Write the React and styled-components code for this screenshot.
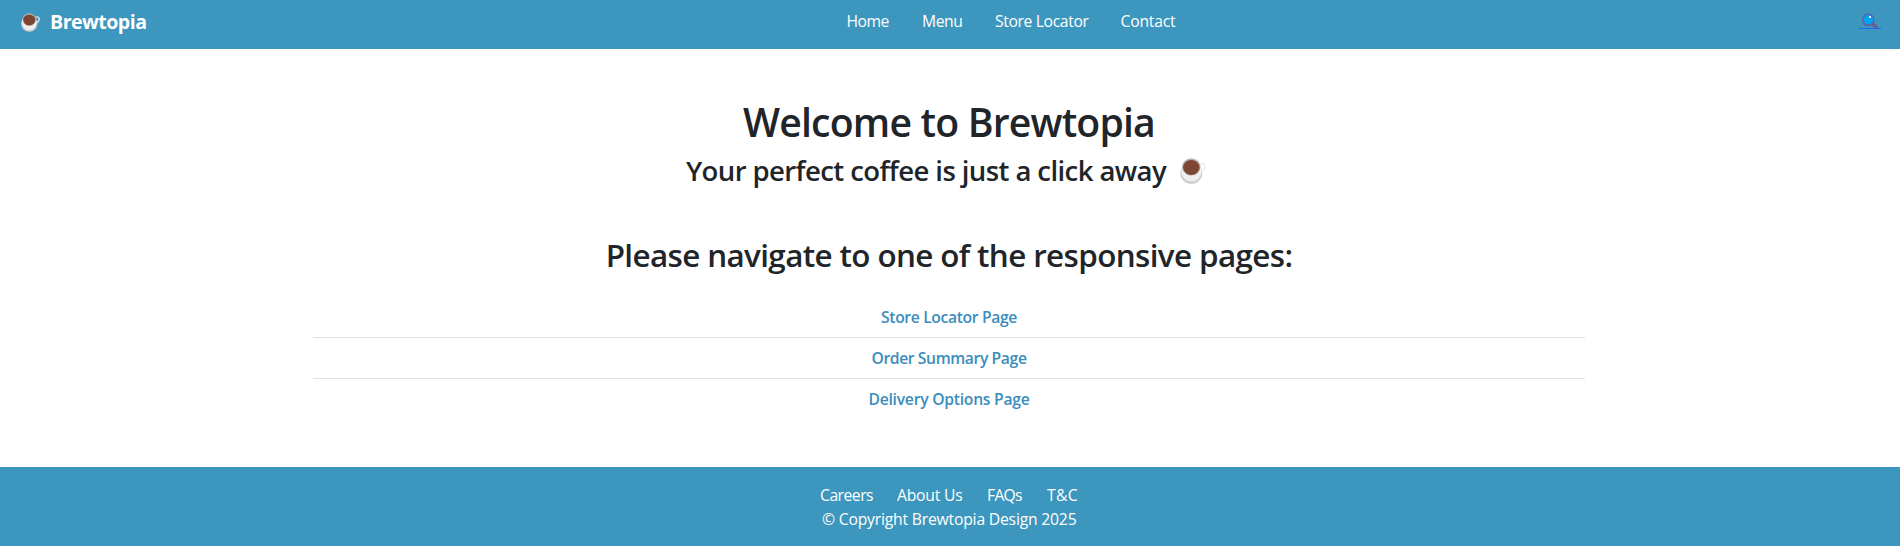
import React from "react";
import styled, { createGlobalStyle } from "styled-components";

const GlobalStyle = createGlobalStyle`
  *, *::before, *::after { box-sizing: border-box; }
  body {
    margin: 0;
    background: #fff;
    color: #212529;
    font: 400 15.7px/24px "Segoe UI", "Open Sans", "Noto Sans", sans-serif;
  }
  h1, h2, h3, ul, p { margin: 0; padding: 0; }
`;

const Page = styled.div`
  display: flex;
  flex-direction: column;
  height: 546px;
`;

const Header = styled.header`
  display: flex;
  justify-content: space-between;
  align-items: flex-start;
  height: 49px;
  padding: 6px 19px 0 21px;
  background: #3d96bd;
`;

const Brand = styled.a`
  display: flex;
  align-items: center;
  gap: 10px;
  width: 143px;
  height: 32px;
  color: #fff;
  font-size: 19.6px;
  font-weight: 700;
  line-height: 32px;
  letter-spacing: ${(p) => p.$spacing || 0}px;
`;

const Nav = styled.nav`
  display: flex;
  gap: 32px;
  padding-top: 3px;
`;

const Label = styled.a`
  width: ${(p) => p.$width}px;
  color: #fff;
  white-space: nowrap;
  letter-spacing: ${(p) => p.$spacing || 0}px;
`;

const SearchLink = styled.a`
  width: 22px;
  height: 23px;
  padding: 7px 0 0 2px;
  border-bottom: 1px solid #0d6efd;
  line-height: 0;
`;

const Main = styled.main`
  display: flex;
  flex: 1;
  flex-direction: column;
  align-items: center;
  padding: 49px 2px 0 0;
`;

const Title = styled.h1`
  font-size: 39.2px;
  font-weight: 600;
  line-height: 48px;
  white-space: nowrap;
  letter-spacing: ${(p) => p.$spacing || 0}px;
`;

const Subtitle = styled.h3`
  display: flex;
  align-items: center;
  gap: 14px;
  margin-top: 8px;
  padding-right: 6px;
  font-size: 27.5px;
  font-weight: 600;
  line-height: 34px;
  white-space: nowrap;
  letter-spacing: ${(p) => p.$spacing || 0}px;
`;

const Prompt = styled.h2`
  margin-top: 48px;
  font-size: 31.4px;
  font-weight: 600;
  line-height: 38px;
  white-space: nowrap;
  letter-spacing: ${(p) => p.$spacing || 0}px;
`;

const PageList = styled.ul`
  width: 1272px;
  margin-top: 23px;
  list-style: none;
`;

const PageItem = styled.li`
  height: 41px;
  padding: 8px 0;
  border-bottom: 1px solid #dee2e6;
  color: #3b8dbd;
  font-weight: 600;
  text-align: center;
  letter-spacing: ${(p) => p.$spacing || 0}px;
  &:last-child { border-bottom: 0; }
`;

const Footer = styled.footer`
  display: flex;
  flex-direction: column;
  align-items: center;
  height: 79px;
  padding: 16px 2px 0 0;
  background: #3d96bd;
`;

const FooterLinks = styled.div`
  display: flex;
  gap: 24px;
`;

const Cup = ({ size, handle }) => (
  <svg width={size} height={size} viewBox="0 0 26 26" aria-hidden="true">
    <ellipse cx="11.3" cy="15" rx="11" ry="10.8" fill="#cdcdcd" />
    <path d="M20 6c3-1.600 5.300 0 4.800 3.200-.5 3-2.600 4.600-5.300 4.600" fill="none" stroke={handle} strokeWidth="1.800" />
    <ellipse cx="11.3" cy="13" rx="10.2" ry="10.6" fill="#efefef" />
    <ellipse cx="11.3" cy="8.900" rx="9.200" ry="8.700" fill="#b4b4b4" />
    <ellipse cx="11.3" cy="9.500" rx="8.200" ry="7.500" fill="#7d4533" />
  </svg>
);

const Magnifier = () => (
  <svg width="18" height="16" viewBox="0 0 18 16" aria-hidden="true">
    <path d="M12.300 11.300l3 3" stroke="#6b5a96" strokeWidth="3.400" strokeLinecap="round" />
    <circle cx="7.300" cy="6.700" r="5.600" fill="#00a1f1" stroke="#6b5a9c" strokeWidth="1.400" />
    <rect x="8" y="3" width="2" height="2" fill="#e3f5ff" />
  </svg>
);

const navLinks = [
  ["Home", 43.5, -0.5],
  ["Menu", 41, -0.45],
  ["Store Locator", 93.5, -0.36],
  ["Contact", 56, -0.22],
];

const footerLinks = [
  ["Careers", 53, -0.5],
  ["About Us", 66, -0.2],
  ["FAQs", 36, -0.7],
  ["T&C", 31, 0.4],
];

const pages = [
  ["Store Locator Page", -0.36],
  ["Order Summary Page", -0.39],
  ["Delivery Options Page", -0.25],
];

export default function App() {
  return (
    <>
      <GlobalStyle />
      <Page>
        <Header>
          <Brand $spacing={-0.53}><Cup size={19} handle="#e2e6e8" />Brewtopia</Brand>
          <Nav>
            {navLinks.map(([text, width, spacing]) => (
              <Label key={text} $width={width} $spacing={spacing}>{text}</Label>
            ))}
          </Nav>
          <SearchLink aria-label="Search"><Magnifier /></SearchLink>
        </Header>
        <Main>
          <Title $spacing={-0.82}>Welcome to Brewtopia</Title>
          <Subtitle $spacing={-0.58}>Your perfect coffee is just a click away<Cup size={26} handle="#f0f0f0" /></Subtitle>
          <Prompt $spacing={-0.62}>Please navigate to one of the responsive pages:</Prompt>
          <PageList>
            {pages.map(([text, spacing]) => (
              <PageItem key={text} $spacing={spacing}>{text}</PageItem>
            ))}
          </PageList>
        </Main>
        <Footer>
          <FooterLinks>
            {footerLinks.map(([text, width, spacing]) => (
              <Label key={text} $width={width} $spacing={spacing}>{text}</Label>
            ))}
          </FooterLinks>
          <Label as="p" $width={254} $spacing={-0.19}>© Copyright Brewtopia Design 2025</Label>
        </Footer>
      </Page>
    </>
  );
}
